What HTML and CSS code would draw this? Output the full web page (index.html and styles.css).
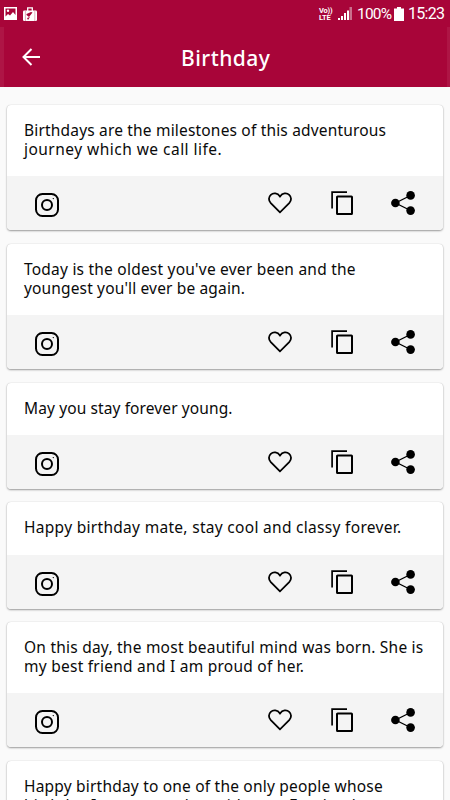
FILE: index.html
```
<!DOCTYPE html>
<html lang="en">
<head>
<meta charset="utf-8">
<title>Birthday</title>
<link rel="stylesheet" href="styles.css">
</head>
<body>
<svg class="sprite" aria-hidden="true">
  <symbol id="insta" viewBox="0 0 24 24"><rect x="1" y="1" width="22" height="22" rx="6.5" fill="none" stroke="#000" stroke-width="2"/><circle cx="12" cy="12" r="5" fill="none" stroke="#000" stroke-width="2"/><circle cx="18.3" cy="5.6" r=".7" fill="#000"/></symbol>
  <symbol id="heart" viewBox="0 0 24 22"><path d="M12 20.300 2.800 11.200C.3 8.600.4 5 2.800 2.800 5.300.5 9.500.8 12 4.500 14.500.8 18.700.5 21.200 2.800c2.400 2.200 2.500 5.800 0 8.400Z" fill="none" stroke="#000" stroke-width="1.800"/></symbol>
  <symbol id="copy" viewBox="0 0 22 24"><path d="M1.100 17.500V1.100H16" fill="none" stroke="#000" stroke-width="1.700"/><rect x="6" y="5.500" width="15" height="17.500" rx=".6" fill="none" stroke="#000" stroke-width="2"/></symbol>
  <symbol id="share" viewBox="0 0 24 24"><path d="M19.500 4.500 4.500 12l15 7.500" fill="none" stroke="#000" stroke-width="1.300"/><circle cx="19.600" cy="4.400" r="4.300"/><circle cx="4.400" cy="12" r="4.300"/><circle cx="19.600" cy="19.600" r="4.300"/></symbol>
</svg>
<header class="top">
  <div class="status">
    <svg class="pic" viewBox="0 0 13 13"><path fill="#fff" fill-rule="evenodd" d="M0 0h13v13H0ZM1.500 1.500v8L4 7l2 1.500 3-3.500 2.500 3V1.500Z"/><circle cx="4" cy="3.800" r="1.200" fill="#fff"/></svg>
    <svg class="bag" viewBox="0 0 14 14"><path d="M4.700 4V.8h4.600V4" fill="none" stroke="#fff" stroke-width="1.300"/><rect y="3.500" width="14" height="10.500" rx="1.200" fill="#fff"/><path d="M2.400 4v10M11.800 4v10" stroke="#d58aa4" stroke-width=".7"/><path d="M3.500 8 6 10l3.500-4.500L8 5 3.500 7Z M4 11l3-1-2 3Z" fill="#a80539"/></svg>
    <div class="volte"><span>Vo))</span><span>LTE</span></div>
    <svg class="signal" viewBox="0 0 14 13"><path fill="#fff" d="M0 13v-2h2v2ZM3 13V9h2v4ZM6 13V6h2v7ZM9 13V3.500h2V13Z"/><path d="M11.500 13V0H14v13Z" fill="#c96f8c"/></svg>
    <span class="percent">100%</span>
    <svg class="battery" viewBox="0 0 10 14"><path fill="#fff" d="M3 0h4v1.500h3V14H0V1.500h3Z"/></svg>
    <span class="clock">15:23</span>
  </div>
  <div class="bar">
    <svg class="back" viewBox="0 0 18 18"><path d="M9.500 1 1.500 9l8 8M1.500 9H18" fill="none" stroke="#fff" stroke-width="2"/></svg>
    <h1>Birthday</h1>
  </div>
</header>
<main class="list">
  <article class="card"><p class="quote"><span class="w1">Birthdays are the milestones of this adventurous</span><span class="w2">journey which we call life.</span></p><div class="actions"><svg class="insta"><use href="#insta"/></svg><svg class="heart"><use href="#heart"/></svg><svg class="copy"><use href="#copy"/></svg><svg class="share"><use href="#share"/></svg></div></article>
  <article class="card"><p class="quote"><span class="w3">Today is the oldest you've ever been and the</span><span class="w4">youngest you'll ever be again.</span></p><div class="actions"><svg class="insta"><use href="#insta"/></svg><svg class="heart"><use href="#heart"/></svg><svg class="copy"><use href="#copy"/></svg><svg class="share"><use href="#share"/></svg></div></article>
  <article class="card"><p class="quote"><span class="w5">May you stay forever young.</span></p><div class="actions"><svg class="insta"><use href="#insta"/></svg><svg class="heart"><use href="#heart"/></svg><svg class="copy"><use href="#copy"/></svg><svg class="share"><use href="#share"/></svg></div></article>
  <article class="card"><p class="quote"><span class="w6">Happy birthday mate, stay cool and classy forever.</span></p><div class="actions"><svg class="insta"><use href="#insta"/></svg><svg class="heart"><use href="#heart"/></svg><svg class="copy"><use href="#copy"/></svg><svg class="share"><use href="#share"/></svg></div></article>
  <article class="card"><p class="quote"><span class="w7">On this day, the most beautiful mind was born. She is</span><span class="w8">my best friend and I am proud of her.</span></p><div class="actions"><svg class="insta"><use href="#insta"/></svg><svg class="heart"><use href="#heart"/></svg><svg class="copy"><use href="#copy"/></svg><svg class="share"><use href="#share"/></svg></div></article>
  <article class="card"><p class="quote"><span class="w9">Happy birthday to one of the only people whose</span><span class="w10">birthday I can remember without a Facebook</span></p></article>
</main>
</body>
</html>
```
FILE: styles.css
```
* { box-sizing: border-box; }
html, body { margin: 0; height: 800px; overflow: hidden; }
body { width: 450px; background: #fafafa; color: #0a0a0a; font-family: "Noto Sans", "Open Sans", sans-serif; }
.sprite { display: none; }
svg { flex: none; display: block; }
.top { height: 87px; background: #a80539; color: #fff; }
.status { height: 27px; display: flex; align-items: center; padding-left: 4px; font: 16px/20px Roboto, sans-serif; }
.pic { width: 13px; height: 13px; }
.bag { width: 14px; height: 14px; margin-left: 6px; }
.volte { width: 14px; margin-left: 282px; font-size: 7.500px; line-height: 7px; font-weight: 700; letter-spacing: -.2px; }
.volte span { display: block; white-space: nowrap; }
.signal { width: 14px; height: 13px; margin-left: 5px; }
.percent { width: 35px; margin-left: 5px; font-size: 15.500px; letter-spacing: -.8px; }
.battery { width: 10px; height: 14px; margin-left: 2px; }
.clock { margin-left: 4px; letter-spacing: -.7px; white-space: nowrap; }
.bar { height: 60px; display: flex; align-items: center; padding-left: 18px; border-left: 4px solid #ae1545; border-right: 3px solid #ae1545; }
.back { width: 18px; height: 18px; }
h1 { margin: 2px 0 0 141px; font-size: 21px; line-height: 28px; font-weight: 500; letter-spacing: .45px; white-space: nowrap; }
.list { padding: 18.200px 7px 0; display: flex; flex-direction: column; gap: 13.400px; }
.card { flex: none; background: #fff; border-radius: 4px; overflow: hidden; box-shadow: 0 1px 2px rgba(0,0,0,.38), 0 0 1px rgba(0,0,0,.2); }
.quote { margin: 0; padding: 16px 17px 17.300px; font-size: 15.500px; line-height: 19px; }
.quote span { display: block; width: max-content; white-space: nowrap; }
.w1 { letter-spacing: .18px; }
.w2 { letter-spacing: .47px; }
.w3 { letter-spacing: .22px; }
.w4 { letter-spacing: .15px; }
.w5 { letter-spacing: .11px; }
.w6 { letter-spacing: .3px; }
.w7 { letter-spacing: .23px; }
.w8 { letter-spacing: .25px; }
.w9, .w10 { letter-spacing: .2px; }
.actions { height: 54px; background: #f4f4f4; display: flex; align-items: flex-start; padding: 15px 0 0 28px; }
.insta { width: 24px; height: 24px; margin-top: 2px; }
.heart { width: 24px; height: 22px; margin: 1px 0 0 209px; }
.copy { width: 22px; height: 24px; margin-left: 39px; }
.share { width: 24px; height: 24px; margin-left: 38px; }
```
